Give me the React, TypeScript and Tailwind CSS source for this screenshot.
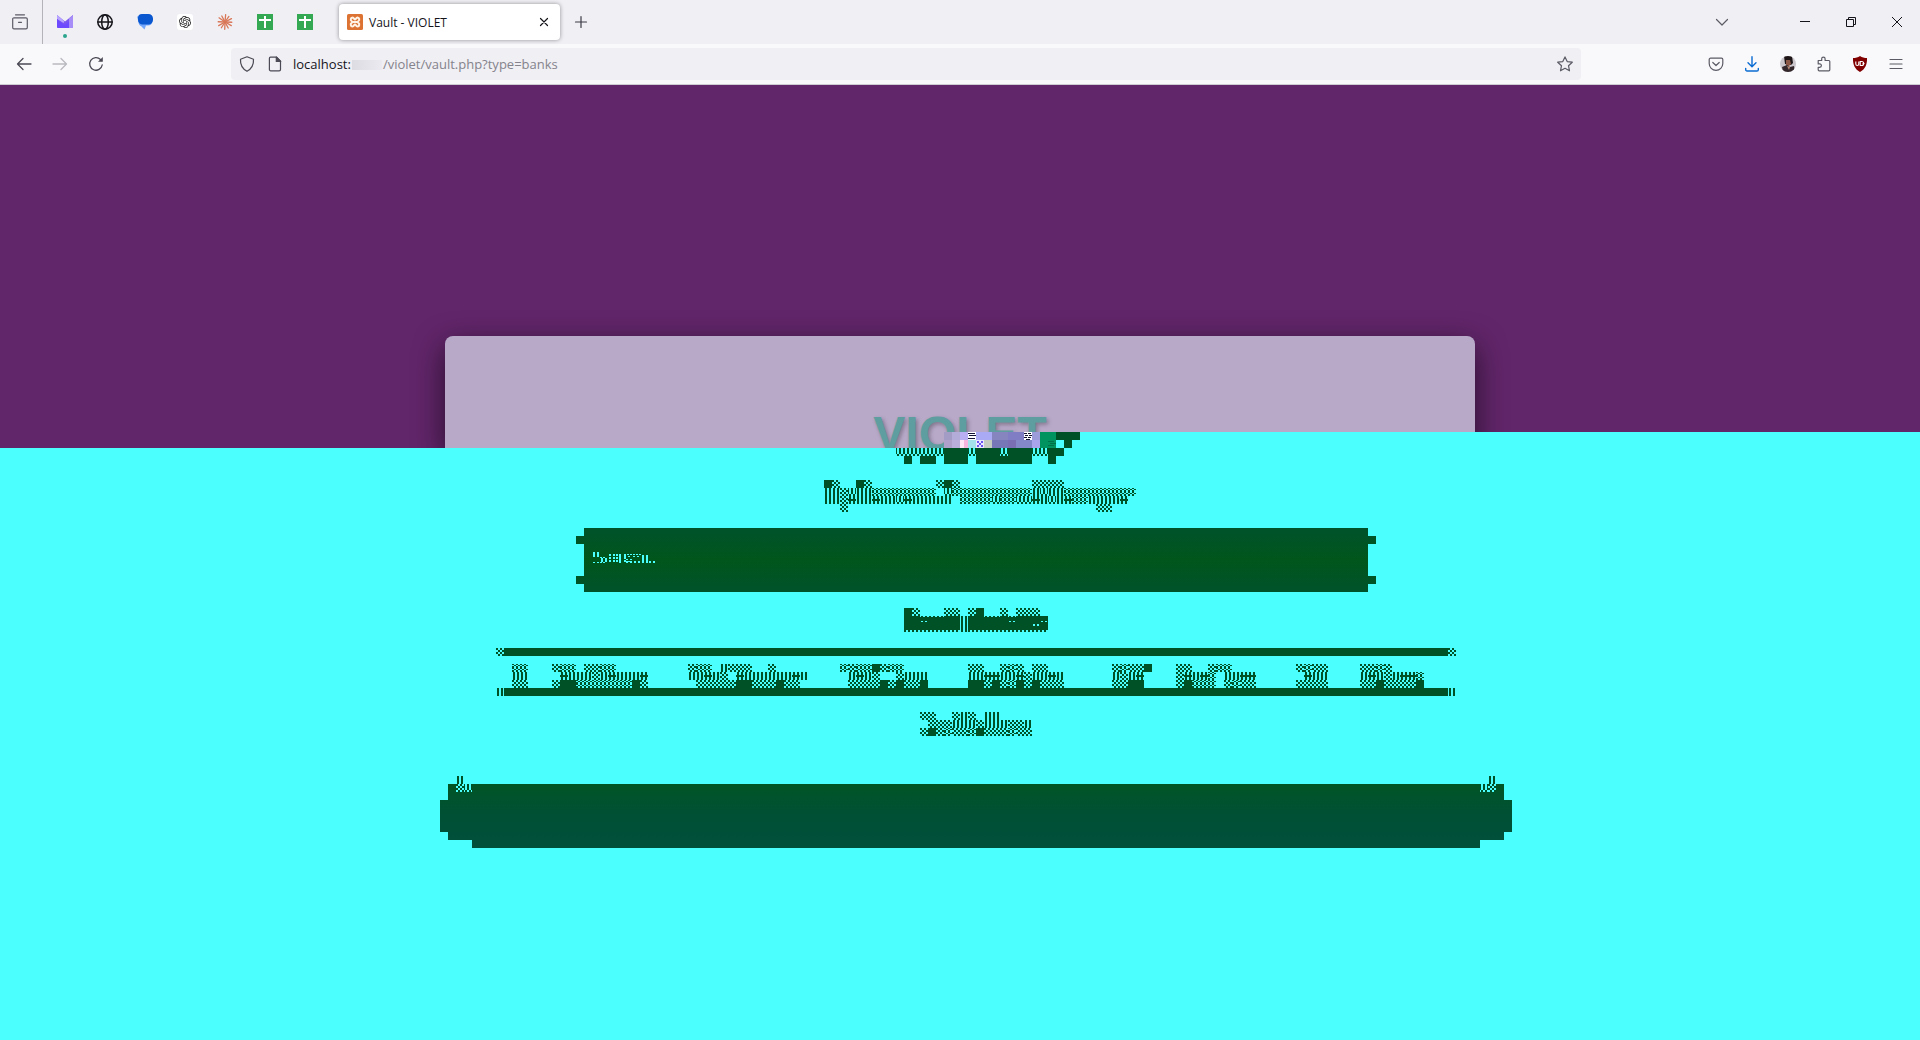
import React from "react";

type IconProps = { children: React.ReactNode; size?: number; className?: string };

function Icon({ children, size = 16, className = "" }: IconProps) {
  return (
    <svg
      width={size}
      height={size}
      viewBox="0 0 16 16"
      fill="none"
      stroke="currentColor"
      strokeWidth="1.2"
      strokeLinecap="round"
      strokeLinejoin="round"
      className={className}
      aria-hidden="true"
    >
      {children}
    </svg>
  );
}

/* ---------- block art ---------- */

const CELL = 8;
const FILLS: Record<string, string> = {
  "#": "#005226",
  x: "url(#check)",
  f: "url(#fine)",
  "|": "url(#bars)",
  w: "url(#mixed)",
  "+": "url(#cross)",
  g: "url(#fringeTop)",
  b: "url(#fringeBottom)",
};

function Patterns() {
  const d = "#005226";
  return (
    <svg width="0" height="0" className="absolute" aria-hidden="true">
      <defs>
        <pattern id="check" width="4" height="4" patternUnits="userSpaceOnUse">
          <path d="M0 0h2v2h-2zM2 2h2v2h-2z" fill={d} />
        </pattern>
        <pattern id="fine" width="4" height="4" patternUnits="userSpaceOnUse">
          <path d="M0 0h2v1h-2zM2 1h2v1h-2zM0 2h2v2h-2z" fill={d} />
        </pattern>
        <pattern id="bars" width="4" height="8" patternUnits="userSpaceOnUse">
          <path d="M1 0h2v8h-2z" fill={d} />
        </pattern>
        <pattern id="mixed" width="4" height="8" patternUnits="userSpaceOnUse">
          <path d="M0 0h1v6h-1zM3 0h1v6h-1zM1 6h2v2h-2z" fill={d} />
        </pattern>
        <pattern id="cross" width="4" height="8" patternUnits="userSpaceOnUse">
          <path d="M1 0h2v8h-2zM0 3h4v2h-4z" fill={d} />
        </pattern>
        <pattern id="fringeTop" width="4" height="8" patternUnits="userSpaceOnUse">
          <path d="M1 0h2v1h-2zM0 1h4v7h-4z" fill={d} />
        </pattern>
        <pattern id="fringeBottom" width="4" height="8" patternUnits="userSpaceOnUse">
          <path d="M0 0h4v6h-4zM0 6h2v2h-2z" fill={d} />
        </pattern>
      </defs>
    </svg>
  );
}

function Blocks({ rows, cols, children }: { rows: string[]; cols: number; children?: React.ReactNode }) {
  return (
    <svg
      width={cols * CELL}
      height={rows.length * CELL}
      shapeRendering="crispEdges"
      className="block shrink-0"
      aria-hidden="true"
    >
      {rows.flatMap((row, y) =>
        row.split("").map((c, x) =>
          FILLS[c] ? (
            <rect key={`${x}-${y}`} x={x * CELL} y={y * CELL} width={CELL} height={CELL} fill={FILLS[c]} />
          ) : null,
        ),
      )}
      {children}
    </svg>
  );
}

const TITLE = [".wwwwww###w###w###ww##", "..#.##.###.#######..#."];
const SUBTITLE = [
  ".#x..#x........x#x.........xxxx",
  ".||xw||ffffffff.wffffffffff|w||fffffffff",
  ".||x+||+||w+|||||.ffffwffww+|w|+ff||||+.",
  "...x...............................xx",
];
const HEADING = ["#x...xx.x#..x.xxx.", "##ggg##|##gg#g####", "bbbbbbb|bbbbbbbbbb"];
const SECTION = ["xx..x|x.||", ".xxx|||x|||xx|", "x#xfxxf#xxxfxx"];

const COLUMNS: { cols: number; rows: string[] }[] = [
  { cols: 7, rows: ["..ff", "..||", "..xx"] },
  { cols: 17, rows: ["xff.xxff", ".+|||x|+|||+", "x##fffffff#x"] },
  { cols: 19, rows: ["xff.|xxx..x", "||+|x.+||||||+|", ".xxxxx##xxx#xx"] },
  { cols: 16, rows: ["fxff#xff", ".|+|x..x|||", ".xxxx#x#xx#"] },
  { cols: 18, rows: ["xx..xfx.xx", "||++||+x||+|", "##x#xf#x#xxx"] },
  { cols: 8, rows: ["xfxx#", "|x|+", "xx##"] },
  { cols: 15, rows: ["xx..xff", "x+|+f.||++", "x#fff.xfxx"] },
  { cols: 8, rows: ["xfxx", ".+||", "xxxx"] },
  { cols: 12, rows: ["xxfx", "|+|x|++f", "xx#xxxx#"] },
];

function Rule({ end }: { end: string }) {
  return (
    <div className="flex h-2">
      <Blocks rows={[end]} cols={1} />
      <div className="flex-1 bg-[#005226]" />
      <Blocks rows={[end]} cols={1} />
    </div>
  );
}

function Mosaic() {
  const tiles: [number, number, number, number, string][] = [
    [0, 0, 8, 8, "#a39cc4"],
    [8, 0, 8, 8, "#b3abd8"],
    [16, 0, 8, 8, "#b9aef4"],
    [24, 0, 8, 8, "#ffffff"],
    [32, 0, 16, 8, "#aaaaf4"],
    [48, 0, 16, 8, "#8785c0"],
    [64, 0, 16, 8, "#817dc4"],
    [80, 0, 8, 8, "#ffffff"],
    [88, 0, 8, 8, "#9c9cdb"],
    [96, 0, 16, 16, "#00935f"],
    [112, 0, 24, 8, "#005226"],
    [0, 8, 8, 8, "#aea0ca"],
    [8, 8, 8, 8, "#b9aedc"],
    [16, 8, 4, 8, "#ffe6f6"],
    [20, 8, 4, 8, "#f7b4dc"],
    [24, 8, 8, 8, "#a2e2ea"],
    [32, 8, 8, 8, "#e9e6ff"],
    [40, 8, 8, 8, "#c4cbc0"],
    [48, 8, 16, 8, "#7776b6"],
    [64, 8, 8, 8, "#7a6fb4"],
    [72, 8, 16, 8, "#8588c8"],
    [88, 8, 8, 8, "#aaa4ec"],
    [112, 8, 24, 8, "#4bffff"],
    [120, 8, 8, 8, "#005226"],
  ];
  return (
    <svg width="136" height="16" shapeRendering="crispEdges" className="block shrink-0" aria-hidden="true">
      {tiles.map(([x, y, w, h, c], i) => (
        <rect key={i} x={x} y={y} width={w} height={h} fill={c} />
      ))}
      <path d="M24 1h7v1h-7zM25 3h7v1h-7zM24 6h7v1h-7z" fill="#111133" />
      <path d="M80 1h3v1h-3zM84 1h3v1h-3zM81 3h3v1h-3zM85 3h3v1h-3zM80 5h3v1h-3zM84 5h3v1h-3zM82 7h4v1h-4z" fill="#11112b" />
      <path d="M33 9h2v2h-2zM37 9h2v2h-2zM35 11h2v2h-2zM33 13h2v2h-2zM37 13h2v2h-2z" fill="#6a55f0" />
      <path d="M104 9h6v1h-6zM106 11h6v1h-6zM104 13h6v1h-6z" fill="#00704a" />
    </svg>
  );
}

/* ---------- browser chrome ---------- */

function MailIcon() {
  return (
    <svg width="16" height="16" viewBox="0 0 16 16" aria-hidden="true">
      <path d="M0 1l8 6.5L16 1v11.500a1.500 1.500 0 0 1-1.500 1.500h-13A1.500 1.500 0 0 1 0 12.500z" fill="#7a55f0" />
      <path d="M0 1l7 6a2 2 0 0 1-.5 2L0 5z" fill="#b9a6ff" />
      <path d="M16 1v11.500a1.500 1.500 0 0 1-1.500 1.500H12V4.500z" fill="#a78df8" />
      <path d="M0 5l6 5c1 .7 2 .7 3 0l3-2.500V14H1.500A1.500 1.500 0 0 1 0 12.500z" fill="#6d4aff" />
    </svg>
  );
}

function ChatIcon() {
  return (
    <svg width="16" height="16" viewBox="0 0 16 16" aria-hidden="true">
      <path d="M0 2.500h11a4 4 0 0 1 4 4v1a4 4 0 0 1-4 4H9L7.500 15.500 4.500 12.500A5 5 0 0 1 1.500 8z" fill="#74a7fb" />
      <path d="M5 0h6.500A4.500 4.500 0 0 1 16 4.500v1.500A4.500 4.500 0 0 1 11.500 10.500H5.500A4.500 4.500 0 0 1 1 6V4A4 4 0 0 1 5 0z" fill="#0b57d0" />
    </svg>
  );
}

function KnotIcon() {
  return (
    <span className="flex size-4 items-center justify-center rounded-[3px] bg-white">
      <svg width="12" height="12" viewBox="0 0 24 24" fill="#222" aria-hidden="true">
        <path d="M22.282 9.821a5.985 5.985 0 0 0-.516-4.910 6.046 6.046 0 0 0-6.510-2.900A6.065 6.065 0 0 0 4.981 4.182a5.985 5.985 0 0 0-3.998 2.900 6.046 6.046 0 0 0 .743 7.097 5.980 5.980 0 0 0 .511 4.911 6.051 6.051 0 0 0 6.515 2.900A5.985 5.985 0 0 0 13.260 24a6.056 6.056 0 0 0 5.772-4.206 5.990 5.990 0 0 0 3.998-2.900 6.056 6.056 0 0 0-.748-7.073zM13.260 22.430a4.476 4.476 0 0 1-2.876-1.040l.142-.081 4.778-2.758a.795.795 0 0 0 .393-.681v-6.737l2.020 1.169a.071.071 0 0 1 .038.052v5.583a4.504 4.504 0 0 1-4.495 4.493zM3.600 18.304a4.471 4.471 0 0 1-.535-3.014l.142.085 4.783 2.759a.771.771 0 0 0 .780 0l5.843-3.369v2.332a.080.080 0 0 1-.033.062L9.740 19.950a4.499 4.499 0 0 1-6.140-1.646zM2.341 7.896a4.485 4.485 0 0 1 2.366-1.973V11.600a.766.766 0 0 0 .388.677l5.814 3.354-2.020 1.169a.076.076 0 0 1-.071 0l-4.830-2.787A4.504 4.504 0 0 1 2.341 7.872zm16.597 3.855l-5.833-3.387L15.119 7.200a.076.076 0 0 1 .071 0l4.830 2.791a4.494 4.494 0 0 1-.676 8.105v-5.678a.790.790 0 0 0-.407-.667zm2.011-3.023l-.142-.085-4.774-2.782a.776.776 0 0 0-.785 0L9.409 9.230V6.897a.066.066 0 0 1 .028-.062l4.830-2.787a4.499 4.499 0 0 1 6.680 4.660zM8.307 12.863l-2.020-1.164a.080.080 0 0 1-.038-.057V6.075a4.499 4.499 0 0 1 7.376-3.454l-.142.081L8.704 5.460a.795.795 0 0 0-.393.681zm1.097-2.365l2.602-1.500 2.607 1.500v2.999l-2.597 1.500-2.607-1.500z" />
      </svg>
    </span>
  );
}

function BurstIcon() {
  return (
    <svg width="16" height="16" viewBox="0 0 16 16" stroke="#d97757" strokeWidth="1.300" strokeLinecap="round" aria-hidden="true">
      {[5, 35, 62, 92, 120, 152, 182, 212, 240, 272, 305, 332].map((a, i) => (
        <path key={a} transform={`rotate(${a} 8 8)`} d={i % 2 ? "M8 8V1.200" : "M8 8V0.700"} />
      ))}
    </svg>
  );
}

function SheetIcon() {
  return (
    <svg width="16" height="16" viewBox="0 0 16 16" shapeRendering="crispEdges" aria-hidden="true">
      <rect width="16" height="16" rx="1.500" fill="#34a853" />
      <path d="M7 2h2v3h5v2H9v7H7V7H2V5h5z" fill="#fff" />
    </svg>
  );
}

function XamppIcon() {
  return (
    <svg width="16" height="16" viewBox="0 0 16 16" aria-hidden="true">
      <rect width="16" height="16" rx="1.500" fill="#dd7332" />
      <path
        d="M5.500 3.500a2 2 0 0 0-.8 3.700M5.500 3.500C7.200 3.500 7 5.500 8 5.500S8.800 3.500 10.500 3.500a2 2 0 0 1 .8 3.700M4.700 7.200L5.800 8 4.700 8.800a2 2 0 0 0 .8 3.700c1.700 0 1.500-2 2.500-2s.8 2 2.500 2a2 2 0 0 0 .8-3.700L10.200 8l1.100-.8M5.800 8h4.400"
        fill="none"
        stroke="#fff3e6"
        strokeWidth="2"
        strokeLinejoin="round"
      />
    </svg>
  );
}

function TabButton({ label, children, dot }: { label: string; children: React.ReactNode; dot?: boolean }) {
  return (
    <button aria-label={label} className="relative flex h-11 w-10 items-center justify-center">
      {children}
      {dot && <span className="absolute bottom-1.5 left-[18px] size-1 rounded-full bg-[#2ca58d]" />}
    </button>
  );
}

function TabBar() {
  return (
    <div className="flex h-11 items-center bg-[#f0eff4] text-[#15141a]">
      <button aria-label="Recent browsing" className="flex h-11 w-[43px] items-center justify-center border-r border-[#b4b3b9] pr-0.5 text-[#5b5b66]">
        <Icon>
          <path d="M3.500 .8h9M2 3.800h12a1.300 1.300 0 0 1 1.300 1.300V13.500a1.300 1.300 0 0 1-1.300 1.300H2A1.300 1.300 0 0 1 .7 13.500V5.100A1.300 1.300 0 0 1 2 3.800zM6.500 8.300h3" />
        </Icon>
      </button>
      <div className="flex pl-0.5">
        <TabButton label="Mail" dot><MailIcon /></TabButton>
        <TabButton label="Web">
          <Icon>
            <g strokeWidth="1.500">
              <circle cx="8" cy="8" r="7.200" />
              <ellipse cx="8" cy="8" rx="3.300" ry="7.200" />
              <path d="M1 8h14" />
            </g>
          </Icon>
        </TabButton>
        <TabButton label="Messages"><ChatIcon /></TabButton>
        <TabButton label="Chat"><KnotIcon /></TabButton>
        <TabButton label="Assistant"><BurstIcon /></TabButton>
        <TabButton label="Sheet one"><SheetIcon /></TabButton>
        <TabButton label="Sheet two"><SheetIcon /></TabButton>
      </div>
      <div className="ml-3.5 flex h-9 w-[221px] items-center rounded bg-white px-2 shadow-[0_0_4px_rgba(0,0,0,0.4)]">
        <XamppIcon />
        <span className="ml-1.5 flex-1 pt-px text-xs">Vault - VIOLET</span>
        <button aria-label="Close tab" className="flex size-4 items-center justify-center">
          <Icon><path d="M4.500 4.500l7 7M11.500 4.500l-7 7" /></Icon>
        </button>
      </div>
      <button aria-label="New tab" className="ml-[13px] flex size-4 items-center justify-center text-[#3b3a44]">
        <Icon><path d="M8 2.500v11M2.500 8h11" /></Icon>
      </button>
      <div className="flex-1" />
      <button aria-label="List all tabs" className="mr-[42px] flex h-11 w-9 items-center justify-center text-[#5b5b66]">
        <Icon><path d="M2.500 5.500L8 11l5.500-5.500" /></Icon>
      </button>
      <button aria-label="Minimize" className="flex h-11 w-[46px] items-center justify-center">
        <svg width="10" height="10" aria-hidden="true"><path d="M0 4h10v1h-10z" fill="#15141a" /></svg>
      </button>
      <button aria-label="Restore" className="flex h-11 w-[46px] items-center justify-center">
        <svg width="10" height="10" fill="none" stroke="#15141a" aria-hidden="true"><path d="M.5 2.500h7v7h-7zM2.500 2.500v-2h7v7h-2" /></svg>
      </button>
      <button aria-label="Close window" className="flex h-11 w-[46px] items-center justify-center">
        <svg width="10" height="10" stroke="#15141a" aria-hidden="true"><path d="M0 0l10 10M10 0L0 10" /></svg>
      </button>
    </div>
  );
}

function NavButton({ label, className = "", children }: { label: string; className?: string; children: React.ReactNode }) {
  return (
    <button aria-label={label} className={`flex h-8 w-9 items-center justify-center ${className}`}>
      {children}
    </button>
  );
}

function NavBar() {
  return (
    <div className="flex h-[41px] items-center border-b border-[#cfccd4] bg-[#f9f9fb] px-1.5 text-[#5b5b66]">
      <NavButton label="Back" className="text-[#4b4a55]"><Icon><path d="M15 8H1.500M7 2.500L1.500 8 7 13.500" strokeWidth="1.300" /></Icon></NavButton>
      <NavButton label="Forward" className="text-[#b9b9c0]"><Icon><path d="M1 8h13.500M9 2.500L14.500 8 9 13.500" strokeWidth="1.300" /></Icon></NavButton>
      <NavButton label="Reload" className="text-[#4b4a55]">
        <Icon><path d="M14.200 9A6.300 6.300 0 1 1 12.500 3.500l1 1" strokeWidth="1.300" /><path d="M14.800 1v4.800h-4.800z" fill="currentColor" stroke="none" /></Icon>
      </NavButton>
      <div className="mx-[117px] flex h-8 flex-1 items-center rounded bg-[#f0eff4] pl-2 text-[13px]">
        <Icon className="text-[#4b4a55]"><path d="M8 .8l6.500 2.500c.3 5-1.800 9.500-6.500 12C3.300 12.800 1.200 8.300 1.500 3.300z" /></Icon>
        <Icon className="ml-3 text-[#4b4a55]"><path d="M3.500 1.200h6L13.500 5.200v8.300a1.300 1.300 0 0 1-1.300 1.300h-8.500A1.300 1.300 0 0 1 2.400 13.500V2.500a1.300 1.300 0 0 1 1.100-1.300z" /><path d="M9.300 1l4.400 4.500H9.300z" fill="currentColor" /></Icon>
        <a href="#vault" className="ml-2.5 flex items-center pt-0.5 text-[#84838b]">
          <span className="text-[#15141a]">localhost:</span>
          <span className="mx-px h-2.5 w-[30px] bg-linear-to-r from-[#dddce3] to-[#ebeaf0]" />
          <span>/violet/vault.php?type=banks</span>
        </a>
        <div className="flex-1" />
        <button aria-label="Bookmark" className="mr-2">
          <Icon><path d="M8 .9l2.200 4.700 5.100.6-3.800 3.500 1 5.100L8 12.300l-4.500 2.500 1-5.100L.7 6.200l5.100-.6z" /></Icon>
        </button>
      </div>
      <NavButton label="Pocket"><Icon><path d="M2.500 2.200h11a1.300 1.300 0 0 1 1.300 1.300V7.500a6.800 6.800 0 0 1-13.600 0V3.500a1.300 1.300 0 0 1 1.300-1.300zM4.800 6.500L8 9.500l3.200-3" /></Icon></NavButton>
      <NavButton label="Downloads" className="text-[#0a6bd2]"><Icon><path d="M8 .7v9.800M4 6.800l4 4 4-4M1.700 12.500v1.200a1.300 1.300 0 0 0 1.300 1.300h10a1.300 1.300 0 0 0 1.300-1.300v-1.200" strokeWidth="1.400" /></Icon></NavButton>
      <NavButton label="Profile">
        <svg width="16" height="16" viewBox="0 0 16 16" aria-hidden="true">
          <clipPath id="avatar"><circle cx="8" cy="8" r="8" /></clipPath>
          <g clipPath="url(#avatar)">
            <path d="M0 0h16v16H0z" fill="#c9c5cb" />
            <path d="M4 0h8l1 7-2 2-6-1z" fill="#1d1516" />
            <path d="M6 4h4l1 4-3 3-2-2z" fill="#8a5646" />
            <path d="M2 11l5-2 3 2 4-1 1 6H3z" fill="#33272b" />
            <path d="M7 10l3 1-1 3z" fill="#b98a78" />
          </g>
        </svg>
      </NavButton>
      <NavButton label="Extensions"><Icon><path d="M2.200 4.500h3.500V2.800a1.700 1.700 0 0 1 3.400 0v1.700h3.700a1 1 0 0 1 1 1v8.300a1 1 0 0 1-1 1H3.200a1 1 0 0 1-1-1v-2.500h1.500a1.700 1.700 0 0 0 0-3.400H2.200z" /></Icon></NavButton>
      <NavButton label="Blocker">
        <svg width="16" height="16" viewBox="0 0 16 16" aria-hidden="true">
          <path d="M8 0c2 1.500 4.500 2 7 2 .3 6-1.500 11-7 14C2.500 13 .7 8 1 2c2.500 0 5-.5 7-2z" fill="#800000" />
          <path d="M3.800 5.500v2.500a1.500 1.500 0 0 0 3 0V5.500M8.200 5.500h1.500a2 2 0 0 1 0 4H8.200zM10.500 7.500h2" fill="none" stroke="#fff" strokeWidth="1.100" />
        </svg>
      </NavButton>
      <NavButton label="Menu"><Icon><path d="M2 3.500h12M2 8h12M2 12.500h12" /></Icon></NavButton>
    </div>
  );
}

/* ---------- page ---------- */

export default function App() {
  return (
    <div className="flex min-h-screen flex-col bg-[#4bffff] font-['Open_Sans',sans-serif]">
      <Patterns />
      <header>
        <TabBar />
        <NavBar />
      </header>

      <section className="relative overflow-hidden bg-[#612569] px-6 pt-[251px]">
        <div className="mx-auto h-28 max-w-[1030px] rounded-t-lg bg-[#b8a9c9] pt-[74px] text-center shadow-[0_10px_30px_rgba(0,0,0,0.6)]">
          <h1 className="font-['Liberation_Sans',Arial,sans-serif] text-5xl font-bold text-[#5f9ea0] [text-shadow:2px_2px_4px_rgba(0,0,0,0.3)]">
            VIOLET
          </h1>
        </div>
        <div className="absolute right-0 bottom-0 left-[calc(50%-16px)] flex h-4">
          <Mosaic />
          <div className="flex-1 bg-[#4bffff]" />
        </div>
      </section>

      <main className="flex flex-col items-center pl-8">
        <Blocks rows={TITLE} cols={22} />
        <div className="mt-4"><Blocks rows={SUBTITLE} cols={40} /></div>

        <div className="relative mt-4 w-full max-w-[800px]">
          <input
            type="text"
            aria-label="Search"
            className="block h-16 w-full bg-linear-to-b from-[#00522a] via-[#00561b] to-[#00522a] px-4 text-[#4bffff] outline-none [clip-path:polygon(8px_0,calc(100%-8px)_0,calc(100%-8px)_8px,100%_8px,100%_16px,calc(100%-8px)_16px,calc(100%-8px)_48px,100%_48px,100%_56px,calc(100%-8px)_56px,calc(100%-8px)_64px,8px_64px,8px_56px,0_56px,0_48px,8px_48px,8px_16px,0_16px,0_8px,8px_8px)]"
          />
          <svg width="64" height="12" className="pointer-events-none absolute top-6 left-4" shapeRendering="crispEdges" stroke="#4bffff" fill="none" aria-hidden="true">
            <path strokeWidth="2" d="M2 0v5M6 0v5M10 6v4M14 6v4M28 2v9M51 3v8M55 3v8" />
            <path strokeWidth="2" strokeDasharray="2 1" d="M18 2v9M22 2v9M25 2v9M33 2v9" />
            <path d="M1 10.500h2M5 10.500h2M8 5.500h6M8 10.500h6M35 2.500h14" strokeDasharray="2 1" />
            <path d="M32 4.500h8M34 7.500h6M32 9.500h8M41 4.500h7" strokeDasharray="2 2" />
            <path strokeWidth="2" strokeDasharray="2 2" d="M34 10h6M42 10h6M57 10h8" />
          </svg>
        </div>

        <div className="mt-4">
          <Blocks rows={HEADING} cols={18}>
            <path d="M17 13h2v1h-2zM21 13h2v1h-2zM105 13h2v1h-2zM109 13h2v1h-2zM137 13h2v1h-2zM141 13h2v1h-2zM129 16h2v2h-2zM133 16h2v2h-2z" fill="#4bffff" />
          </Blocks>
        </div>

        <div className="mt-4 w-full max-w-[960px]">
          <Rule end="x" />
          <table className="mt-2 w-full table-fixed border-collapse">
            <thead>
              <tr>
                {COLUMNS.map((c, i) => (
                  <th key={i} className="p-0" style={{ width: c.cols * CELL }}>
                    <Blocks rows={c.rows} cols={c.cols} />
                  </th>
                ))}
              </tr>
            </thead>
          </table>
          <Rule end="|" />
        </div>

        <div className="mt-4"><Blocks rows={SECTION} cols={14} /></div>

        <footer className="mt-10 w-full max-w-[1072px]">
          <div className="flex justify-between px-4">
            <Blocks rows={["|"]} cols={1} />
            <Blocks rows={["|"]} cols={1} />
          </div>
          <div className="flex h-16 justify-between bg-linear-to-b from-[#005524] via-[#005035] to-[#00503c] px-4 [clip-path:polygon(8px_0,calc(100%-8px)_0,calc(100%-8px)_16px,100%_16px,100%_48px,calc(100%-8px)_48px,calc(100%-8px)_56px,calc(100%-32px)_56px,calc(100%-32px)_64px,32px_64px,32px_56px,8px_56px,8px_48px,0_48px,0_16px,8px_16px)]">
            <div className="h-2 bg-[#4bffff]"><Blocks rows={["xw"]} cols={2} /></div>
            <div className="h-2 bg-[#4bffff]"><Blocks rows={["wx"]} cols={2} /></div>
          </div>
        </footer>
      </main>
    </div>
  );
}
